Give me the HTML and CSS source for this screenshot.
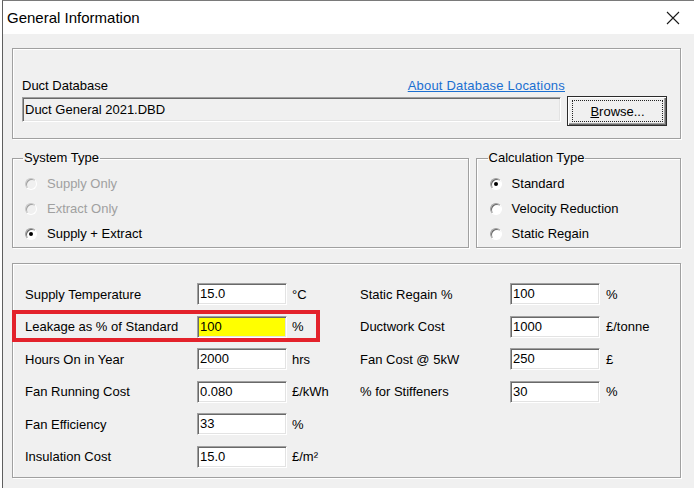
FILE: index.html
```html
<!DOCTYPE html>
<html>

<head>
  <meta charset="UTF-8">
  <title>General Information</title>
  <link rel="stylesheet" href="styles.css">
</head>

<body>
  <div class="window">
    <div class="titlebar">
      <span class="title">General Information</span>
      <svg class="close" width="14" height="14" viewBox="0 0 14 14">
        <path d="M1 1 L13 13 M13 1 L1 13" stroke="#1a1a1a" stroke-width="1.1" fill="none" />
      </svg>
    </div>

    <div class="client">
      <!-- Duct database -->
      <fieldset class="group db-group">
        <div class="db-head">
          <span>Duct Database</span>
          <a href="#" class="link">About Database Locations</a>
        </div>
        <div class="db-row">
          <div class="field readonly">Duct General 2021.DBD</div>
          <button class="btn default"><span class="focus"><u>B</u>rowse...</span></button>
        </div>
      </fieldset>

      <div class="type-row">
        <fieldset class="group system">
          <legend>System Type</legend>
          <label class="radio-row disabled"><span class="radio"></span>Supply Only</label>
          <label class="radio-row disabled"><span class="radio"></span>Extract Only</label>
          <label class="radio-row"><span class="radio checked"></span>Supply + Extract</label>
        </fieldset>

        <fieldset class="group calc">
          <legend>Calculation Type</legend>
          <label class="radio-row"><span class="radio checked"></span>Standard</label>
          <label class="radio-row"><span class="radio"></span>Velocity Reduction</label>
          <label class="radio-row"><span class="radio"></span>Static Regain</label>
        </fieldset>
      </div>

      <!-- Parameters -->
      <fieldset class="group params">
        <div class="param-grid">
          <span>Supply Temperature</span><div class="field">15.0</div><span class="unit">°C</span>
          <span>Static Regain %</span><div class="field">100</div><span class="unit right">%</span>

          <span>Leakage as % of Standard</span><div class="field highlight-field">100</div><span class="unit">%</span>
          <span>Ductwork Cost</span><div class="field">1000</div><span class="unit right">£/tonne</span>

          <span>Hours On in Year</span><div class="field">2000</div><span class="unit">hrs</span>
          <span>Fan Cost @ 5kW</span><div class="field">250</div><span class="unit right">£</span>

          <span>Fan Running Cost</span><div class="field">0.080</div><span class="unit">£/kWh</span>
          <span>% for Stiffeners</span><div class="field">30</div><span class="unit right">%</span>

          <span>Fan Efficiency</span><div class="field">33</div><span class="unit">%</span>
          <span></span><span></span><span></span>

          <span>Insulation Cost</span><div class="field">15.0</div><span class="unit">£/m²</span>
          <span></span><span></span><span></span>
        </div>
        <div class="marker"></div>
      </fieldset>
    </div>
  </div>
</body>

</html>
```

FILE: styles.css
```css
body {
  margin: 0;
  background: #fff;
  font-family: "Liberation Sans", Arial, sans-serif;
  font-size: 13px;
  color: #000;
}

.window {
  margin-left: 2px;
  border-left: 1px solid #5f5f5f;
  border-top: 1px solid #7a7a7a;
  background: #f0f0f0;
  height: 487px;
}

.titlebar {
  height: 33px;
  background: #fff;
  display: flex;
  align-items: center;
  justify-content: space-between;
  padding: 0 14px 0 4px;
}

.title {
  font-size: 15px;
  color: #000;
}

.close {
  margin-top: 1px;
}

.client {
  padding: 14px 0 0 9px;
  width: 669px;
}

.group {
  margin: 0;
  min-width: 0;
  border: 1px solid #a0a0a0;
  box-shadow: 1px 1px 0 #fff, inset 1px 1px 0 #fff;
}

legend {
  padding: 0 1px;
  margin-left: -2px;
  line-height: 16px;
}

/* duct database */
.db-group {
  padding: 29px 0 16px 9px;
}

.db-head {
  display: flex;
  justify-content: space-between;
  width: 543px;
  line-height: 16px;
}

.link {
  color: #1b6fd0;
  text-decoration: underline;
  letter-spacing: 0.2px;
}

.db-row {
  display: flex;
  margin-top: 3px;
}

.field {
  box-sizing: border-box;
  height: 22px;
  width: 90px;
  background: #fff;
  border: 1px solid;
  border-color: #a0a0a0 #fff #fff #a0a0a0;
  box-shadow: inset 1px 1px 0 #696969, inset -1px -1px 0 #e3e3e3;
  padding: 0 2px;
  line-height: 20px;
  white-space: nowrap;
}

.field.readonly {
  width: 539px;
  height: 25px;
  line-height: 23px;
  background: #f0f0f0;
}

.highlight-field {
  background: #ffff00;
}

.btn {
  box-sizing: border-box;
  width: 100px;
  height: 30px;
  margin: -1px 0 -4px 6px;
  padding: 3px 3px 3px 4px;
  background: #f0f0f0;
  border: 1px solid #2b2b2b;
  box-shadow: inset 1px 1px 0 #fff, inset -1px -1px 0 #696969, inset -2px -2px 0 #a0a0a0;
  font: inherit;
  display: flex;
}

.btn .focus {
  flex: 1;
  border: 1px dotted #222;
  display: flex;
  align-items: center;
  justify-content: center;
}

/* radio groups */
.type-row {
  display: flex;
  gap: 7px;
  margin-top: 11px;
}

.system {
  width: 458px;
  box-sizing: border-box;
  padding: 5px 0 1px 12px;
}

.calc {
  width: 206px;
  box-sizing: border-box;
  padding: 5px 0 1px 13px;
}

.radio-row {
  display: flex;
  align-items: center;
  height: 25px;
}

.radio-row.disabled {
  color: #a0a0a0;
}

.radio {
  box-sizing: border-box;
  width: 12px;
  height: 12px;
  border-radius: 50%;
  border: 1px solid;
  border-color: #a0a0a0 #fff #fff #a0a0a0;
  box-shadow: inset 1px 1px 0 #696969;
  background: #fff;
  margin-right: 10px;
  display: flex;
  align-items: center;
  justify-content: center;
}

.disabled .radio {
  box-shadow: inset 1px 1px 0 #a0a0a0;
  border-color: #c8c8c8 #fff #fff #c8c8c8;
  background: #f0f0f0;
}

.radio.checked::after {
  content: "";
  width: 4px;
  height: 4px;
  border-radius: 50%;
  background: #000;
}

/* parameters */
.params {
  position: relative;
  margin-top: 15px;
  padding: 19px 0 9px 12px;
}

.param-grid {
  display: grid;
  grid-template-columns: 172px 90px 73px 150px 90px auto;
  grid-auto-rows: 22px;
  row-gap: 10.5px;
  align-items: center;
}

.unit {
  padding-left: 5px;
}

.unit.right {
  padding-left: 6px;
}

.marker {
  position: absolute;
  top: 46px;
  left: -1px;
  width: 308px;
  height: 32px;
  box-sizing: border-box;
  border: 4px solid #e3222b;
}
```
